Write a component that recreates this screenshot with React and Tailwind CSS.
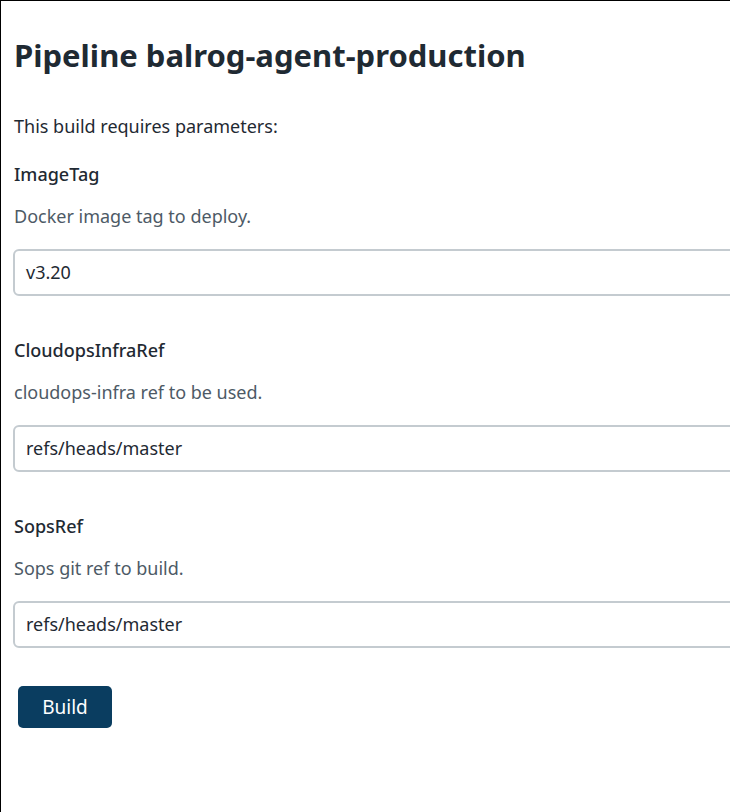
export default function App() {
  const params = [
    { name: "ImageTag", desc: "Docker image tag to deploy.", value: "v3.20" },
    { name: "CloudopsInfraRef", desc: "cloudops-infra ref to be used.", value: "refs/heads/master" },
    { name: "SopsRef", desc: "Sops git ref to build.", value: "refs/heads/master" },
  ];
  return (
    <div
      className="h-[812px] w-[730px] overflow-hidden border-l border-t border-black bg-white text-[#1f2a33]"
      style={{ fontFamily: '"Noto Sans", "Open Sans", sans-serif' }}
    >
      <div className="w-[780px] pl-[12px]">
        <h1 className="pl-[1px] pt-[30px] text-[31px] font-bold leading-[48px] text-[#1f2a33]">
          Pipeline balrog-agent-production
        </h1>
        <p className="mt-[35px] pl-[1px] text-[18px] leading-[24px]">This build requires parameters:</p>
        <div className="mt-[24px] flex flex-col gap-[42px]">
          {params.map((p) => (
            <div key={p.name}>
              <div className="pl-[1px] text-[18px] font-medium leading-[24px]">{p.name}</div>
              <div className="mt-[18px] pl-[1px] text-[18px] leading-[24px] text-[#4d5a66]">{p.desc}</div>
              <div className="mt-[21px] flex h-[47px] items-center rounded-[6px] border-2 border-[#c4cbd0] pl-[11px] text-[18px]">
                {p.value}
              </div>
            </div>
          ))}
        </div>
        <button className="ml-[5px] mt-[38px] h-[42px] w-[94px] rounded-[5px] bg-[#0a3d60] text-[19px] text-white">
          Build
        </button>
      </div>
    </div>
  );
}
